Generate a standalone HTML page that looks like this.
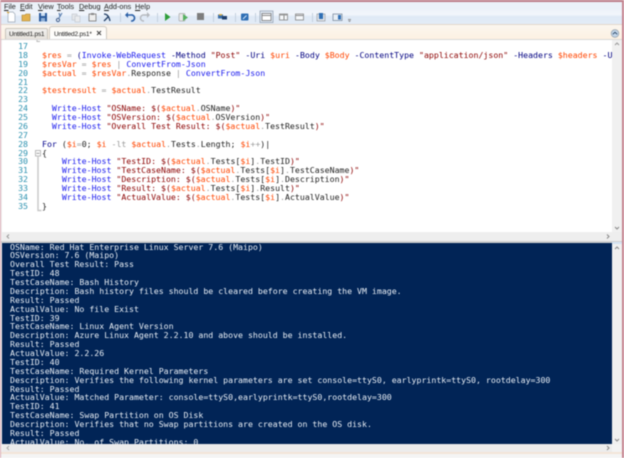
<!DOCTYPE html>
<html><head><meta charset="utf-8"><style>
html,body{margin:0;padding:0;background:#fff}
#r{position:relative;width:624px;height:458px;overflow:hidden;background:#f3f3f3;filter:blur(.45px)}
.a{position:absolute}
.m{position:absolute;top:2px;font:7.300px/9px "Liberation Sans",sans-serif;color:#222}
.m u{text-decoration:underline}
pre{margin:0;font-family:"DejaVu Sans Mono","Liberation Mono",monospace;font-size:8.240px;line-height:8.880px;position:absolute}
.v{color:#ff4500}.c{color:#1a1aee}.s{color:#8b0000}.o{color:#999}.p{color:#000080}.k{color:#00008b}.n{color:#222}
.tab{position:absolute;font:6.500px/10px "Liberation Sans",sans-serif;letter-spacing:-.2px;color:#222;text-align:left}
</style></head><body><div id="r">
<div class="a" style="left:0;top:2px;width:622px;height:8px;background:#ebf1f8"></div>
<div class="a" style="left:0;top:10px;width:622px;height:15px;background:linear-gradient(#eef3fa,#f2f6fc 30%,#dfe9f6 45%,#e3ecf7)"></div>
<div class="a" style="left:0;top:24px;width:622px;height:1px;background:#e3d9cc"></div>
<div class="a" style="left:0;top:25px;width:622px;height:14px;background:linear-gradient(#fbf6ef,#fdf1e2)"></div>
<div class="m" style="left:4px"><u>F</u>ile</div>
<div class="m" style="left:20px"><u>E</u>dit</div>
<div class="m" style="left:38px"><u>V</u>iew</div>
<div class="m" style="left:57px"><u>T</u>ools</div>
<div class="m" style="left:79px"><u>D</u>ebug</div>
<div class="m" style="left:104px"><u>A</u>dd-ons</div>
<div class="m" style="left:135px"><u>H</u>elp</div>

<svg class="a" style="left:0;top:10px" width="624" height="16" viewBox="0 10 624 16">
<path d="M8 12h5l2 2v8H8z" fill="#fff" stroke="#9aa6b4" stroke-width=".7"/><path d="M7 12l2 1" stroke="#e0a020"/>
<path d="M22 15h3l1-1h4v7h-8z" fill="#e3b24e" stroke="#a98232" stroke-width=".6"/>
<rect x="39" y="13" width="8" height="8.500" fill="#2a5a9c"/><rect x="41" y="13" width="4" height="3" fill="#cfe0f2"/><rect x="41" y="18" width="4" height="3.500" fill="#8fb0d6"/>
<path d="M62 13l-3 5M59 13l1 3" stroke="#5a7fb0" stroke-width="1.2" fill="none"/><circle cx="58" cy="20" r="1.600" fill="none" stroke="#445f8a"/>
<rect x="72" y="14" width="5" height="6" fill="#e3e6ea" stroke="#bfc4ca" stroke-width=".6"/><rect x="75" y="16" width="5" height="6" fill="#e9ebee" stroke="#bfc4ca" stroke-width=".6"/>
<rect x="89" y="14" width="7" height="7" fill="#eee" stroke="#777" stroke-width=".8"/><rect x="91" y="13" width="3" height="2" fill="#888"/>
<path d="M104 21l4-4M104 14c3 0 5 2 6 7" stroke="#223f66" stroke-width="1.300" fill="none"/>
<rect x="120" y="13" width="1" height="9" fill="#c4d0de"/>
<path d="M127 15h4a3 3 0 0 1 1 6h-1" stroke="#2a5fa6" stroke-width="1.600" fill="none"/><path d="M125 15l3-3v6z" fill="#2a5fa6"/>
<path d="M148 15h-4a3 3 0 0 0-1 6h1" stroke="#b4b8bd" stroke-width="1.400" fill="none"/><path d="M150 15l-3-3v6z" fill="#b4b8bd"/>
<rect x="157" y="13" width="1" height="9" fill="#c4d0de"/>
<path d="M165 13l5.500 4-5.500 4z" fill="#2f9e3a"/>
<rect x="179" y="13.500" width="6" height="7.500" rx="1" fill="#e8e8e8" stroke="#a8a8a8" stroke-width=".7"/><path d="M183 14l5 3.500-5 3.500z" fill="#55b05f"/>
<rect x="197" y="13" width="7" height="7" fill="#7d7d7d"/>
<rect x="213" y="13" width="1" height="9" fill="#c4d0de"/>
<rect x="218" y="14.500" width="5" height="4" fill="#3a6ea8"/><rect x="222" y="16" width="5" height="3.500" fill="#20406e"/><rect x="219" y="14" width="3" height="1.500" fill="#e0b040"/>
<rect x="235" y="13" width="1" height="9" fill="#c4d0de"/>
<rect x="241" y="13.500" width="7.500" height="7" rx="1" fill="#2f6fb5"/><path d="M243 19l3.500-3.500" stroke="#cfe4fa"/>
<rect x="255" y="13" width="1" height="9" fill="#c4d0de"/>
<rect x="260" y="11" width="13" height="11.500" fill="#dde6f1" stroke="#8d9aab" stroke-width=".7"/>
<rect x="262" y="13.500" width="9" height="7" fill="#fff" stroke="#666" stroke-width=".7"/><path d="M262 15.500h9" stroke="#888"/>
<rect x="279.500" y="14" width="8" height="6" fill="#f6f8fb" stroke="#777" stroke-width=".7"/><path d="M284 14v6" stroke="#888"/><path d="M279.500 15h8" stroke="#999"/>
<rect x="295.500" y="14" width="8" height="6" fill="#f6f8fb" stroke="#777" stroke-width=".7"/><path d="M295.500 15.500h8" stroke="#888"/>
<rect x="312" y="13" width="1" height="9" fill="#c4d0de"/>
<rect x="317" y="14" width="8" height="7" fill="#dfe3e8" stroke="#8a8f96" stroke-width=".6"/><rect x="319" y="13" width="4" height="6" fill="#2f6fb5"/>
<rect x="333" y="14" width="9" height="6.500" fill="#e8eef5" stroke="#6f8096" stroke-width=".7"/><rect x="338" y="15" width="3" height="4.500" fill="#2f6fb5"/>
<path d="M348 19.500h3M348.500 20.500l1 1 1-1" stroke="#777" stroke-width=".7" fill="none"/>
</svg>

<div class="a" style="left:5px;top:28px;width:43px;height:11px;background:linear-gradient(#f1f0ee,#e6e2dc);border:1px solid #c9c4bc;border-bottom:0;border-radius:2px 2px 0 0;box-sizing:border-box"></div>
<div class="a" style="left:49px;top:26px;width:58px;height:14px;background:linear-gradient(#fdfaf5,#fff);border:1px solid #cdc8c0;border-bottom:0;border-radius:3px 3px 0 0;box-sizing:border-box"></div>
<div class="tab" style="left:9px;top:30px">Untitled1.ps1</div>
<div class="tab" style="left:54px;top:30px">Untitled2.ps1*</div>
<svg class="a" style="left:96px;top:30px" width="6" height="6"><path d="M1 1l4 4M5 1L1 5" stroke="#444" stroke-width="1.100"/></svg>
<svg class="a" style="left:609px;top:28px" width="12" height="11"><circle cx="6" cy="5.500" r="3.800" fill="#c3d6ea" stroke="#9aa5b0" stroke-width=".8"/><path d="M3.800 6.300L6 4.300l2.200 2" stroke="#35506f" fill="none"/></svg>

<div class="a" style="left:0;top:39px;width:622px;height:1px;background:#d9d9d9"></div>
<div class="a" style="left:2px;top:40px;width:610px;height:192px;background:#fff;overflow:hidden">
<svg class="a" style="left:34px;top:0" width="5" height="3"><path d="M1 0v1.500h3" stroke="#bbb" fill="none"/></svg>
<pre style="left:11px;top:2px;color:#2b91af;text-align:right;width:15px">17
18
19
20
21
22
23
24
25
26
27
28
29
30
31
32
33
34
35</pre>
<pre style="left:40px;top:10.900px"><span class="v">$res</span> <span class="o">=</span> <span class="k">(</span><span class="c">Invoke-WebRequest</span> <span class="p">-Method</span> <span class="s">"Post"</span> <span class="p">-Uri</span> <span class="v">$uri</span> <span class="p">-Body</span> <span class="v">$Body</span> <span class="p">-ContentType</span> <span class="s">"application/json"</span> <span class="p">-Headers</span> <span class="v">$headers</span> <span class="p">-U</span>
<span class="v">$resVar</span> <span class="o">=</span> <span class="v">$res</span> <span class="o">|</span> <span class="c">ConvertFrom-Json</span>
<span class="v">$actual</span> <span class="o">=</span> <span class="v">$resVar</span><span class="o">.</span><span class="n">Response</span> <span class="o">|</span> <span class="c">ConvertFrom-Json</span>

<span class="v">$testresult</span> <span class="o">=</span> <span class="v">$actual</span><span class="o">.</span><span class="n">TestResult</span>

  <span class="c">Write-Host</span> <span class="s">"OSName: $(</span><span class="v">$actual</span><span class="o">.</span><span class="n">OSName</span><span class="s">)"</span>
  <span class="c">Write-Host</span> <span class="s">"OSVersion: $(</span><span class="v">$actual</span><span class="o">.</span><span class="n">OSVersion</span><span class="s">)"</span>
  <span class="c">Write-Host</span> <span class="s">"Overall Test Result: $(</span><span class="v">$actual</span><span class="o">.</span><span class="n">TestResult</span><span class="s">)"</span>

<span class="k">For</span> <span class="n">(</span><span class="v">$i</span><span class="o">=</span><span class="n">0;</span> <span class="v">$i</span> <span class="o">-lt</span> <span class="v">$actual</span><span class="o">.</span><span class="n">Tests</span><span class="o">.</span><span class="n">Length;</span> <span class="v">$i</span><span class="o">++</span><span class="n">)|</span>
<span class="n">{</span>
    <span class="c">Write-Host</span> <span class="s">"TestID: $(</span><span class="v">$actual</span><span class="o">.</span><span class="n">Tests[</span><span class="v">$i</span><span class="n">]</span><span class="o">.</span><span class="n">TestID</span><span class="s">)"</span>
    <span class="c">Write-Host</span> <span class="s">"TestCaseName: $(</span><span class="v">$actual</span><span class="o">.</span><span class="n">Tests[</span><span class="v">$i</span><span class="n">]</span><span class="o">.</span><span class="n">TestCaseName</span><span class="s">)"</span>
    <span class="c">Write-Host</span> <span class="s">"Description: $(</span><span class="v">$actual</span><span class="o">.</span><span class="n">Tests[</span><span class="v">$i</span><span class="n">]</span><span class="o">.</span><span class="n">Description</span><span class="s">)"</span>
    <span class="c">Write-Host</span> <span class="s">"Result: $(</span><span class="v">$actual</span><span class="o">.</span><span class="n">Tests[</span><span class="v">$i</span><span class="n">]</span><span class="o">.</span><span class="n">Result</span><span class="s">)"</span>
    <span class="c">Write-Host</span> <span class="s">"ActualValue: $(</span><span class="v">$actual</span><span class="o">.</span><span class="n">Tests[</span><span class="v">$i</span><span class="n">]</span><span class="o">.</span><span class="n">ActualValue</span><span class="s">)"</span>
<span class="n">}</span></pre>
<svg class="a" style="left:33px;top:110px" width="10" height="64"><rect x=".5" y=".5" width="5" height="5.500" fill="#fff" stroke="#aaa" stroke-width=".8"/><path d="M1.500 3.300h3" stroke="#888" stroke-width=".8"/><path d="M3 6v54.500h3.500" stroke="#c8c8c8" stroke-width="1.400" fill="none"/></svg>
</div>

<div class="a" style="left:612px;top:40px;width:10px;height:192px;background:#f0f0f0"></div>
<svg class="a" style="left:612px;top:40px" width="10" height="8"><path d="M3 5l2-2 2 2" stroke="#999" fill="none"/></svg>
<svg class="a" style="left:612px;top:224px" width="10" height="8"><path d="M3 3l2 2 2-2" stroke="#888" fill="none"/></svg>
<div class="a" style="left:2px;top:232px;width:620px;height:9px;background:#eee"></div>
<svg class="a" style="left:4px;top:232px" width="8" height="9"><path d="M5 2.500L3 4.500l2 2" stroke="#999" fill="none"/></svg>
<svg class="a" style="left:604px;top:232px" width="8" height="9"><path d="M3 2.500l2 2-2 2" stroke="#888" fill="none"/></svg>
<div class="a" style="left:0;top:241px;width:622px;height:2px;background:#cfcfcf"></div>

<div class="a" style="left:2px;top:243px;width:610px;height:201px;background:#012456;overflow:hidden">
<pre style="left:8px;top:-.500px;color:#e8eef5;line-height:8.870px">OSName: Red Hat Enterprise Linux Server 7.6 (Maipo)
OSVersion: 7.6 (Maipo)
Overall Test Result: Pass
TestID: 48
TestCaseName: Bash History
Description: Bash history files should be cleared before creating the VM image.
Result: Passed
ActualValue: No file Exist
TestID: 39
TestCaseName: Linux Agent Version
Description: Azure Linux Agent 2.2.10 and above should be installed.
Result: Passed
ActualValue: 2.2.26
TestID: 40
TestCaseName: Required Kernel Parameters
Description: Verifies the following kernel parameters are set console=ttyS0, earlyprintk=ttyS0, rootdelay=300
Result: Passed
ActualValue: Matched Parameter: console=ttyS0,earlyprintk=ttyS0,rootdelay=300
TestID: 41
TestCaseName: Swap Partition on OS Disk
Description: Verifies that no Swap partitions are created on the OS disk.
Result: Passed
ActualValue: No. of Swap Partitions: 0</pre>
</div>
<div class="a" style="left:612px;top:243px;width:10px;height:201px;background:#f0f0f0"></div>
<div class="a" style="left:612px;top:242px;width:10px;height:2px;background:#d5e4f3"></div>
<svg class="a" style="left:612px;top:244px" width="10" height="8"><path d="M3 5l2-2 2 2" stroke="#888" fill="none"/></svg>
<svg class="a" style="left:612px;top:436px" width="10" height="8"><path d="M3 3l2 2 2-2" stroke="#888" fill="none"/></svg>
<div class="a" style="left:2px;top:444px;width:610px;height:8px;background:#ececec"></div>
<svg class="a" style="left:4px;top:444px" width="8" height="8"><path d="M5 2L3 4l2 2" stroke="#aaa" fill="none"/></svg>
<svg class="a" style="left:604px;top:444px" width="8" height="8"><path d="M3 2l2 2-2 2" stroke="#888" fill="none"/></svg>
<div class="a" style="left:0;top:452px;width:622px;height:2px;background:#f3e5d8"></div>
<div class="a" style="left:0;top:454px;width:622px;height:4px;background:#f4f4f4"></div>

<div class="a" style="left:0;top:0;width:624px;height:2px;background:#bb7a86"></div>
<div class="a" style="left:0;top:0;width:1px;height:458px;background:#d9a9b2"></div>
<div class="a" style="left:622px;top:0;width:2px;height:458px;background:#c4838f"></div>
</div></body></html>
